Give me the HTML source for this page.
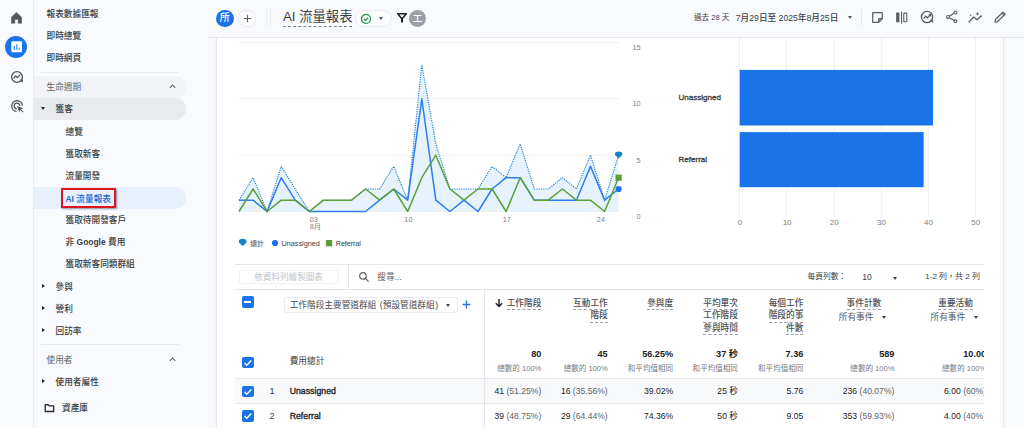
<!DOCTYPE html>
<html lang="zh-Hant">
<head>
<meta charset="utf-8">
<title>AI 流量報表</title>
<style>
*{box-sizing:border-box;margin:0;padding:0}
html,body{width:1024px;height:428px;overflow:hidden;background:#f8fafd}
body{position:relative;font-family:"Liberation Sans","Noto Sans CJK TC",sans-serif;color:#202124;font-size:8.6px;line-height:1}
.abs{position:absolute}
.t{position:absolute;white-space:nowrap;line-height:12px;height:12px}
/* left rail */
#rail{position:absolute;left:0;top:0;width:34px;height:428px;background:#f9fafd;border-right:1px solid #e9ebee}
/* sidebar */
.nav{position:absolute;left:46.5px;font-size:8.67px;color:#3a3d41;white-space:nowrap;line-height:12px;height:12px;font-weight:500}
.nav b{font-weight:700;font-size:8.45px}
.nav.sec{color:#5f6368;font-weight:400}
.nav.l2{left:55.5px}
.nav.l3{left:65.5px}
.pill{position:absolute;left:34px;width:152px;height:22px;border-radius:0 11px 11px 0}
.tri{position:absolute;width:0;height:0;border-style:solid}
.tri.down{border-width:3px 2.5px 0 2.5px;border-color:#202124 transparent transparent transparent}
.tri.right{margin-top:-0.4px;border-width:2.9px 0 2.9px 3.3px;border-color:transparent transparent transparent #202124}
.hr{position:absolute;height:1px;background:#e8eaec}
/* header */
#hdr{position:absolute;left:208px;top:0;width:816px;height:38px;background:#f9fafd;border-bottom:1px solid #e3e5e8}
/* card */
#card{position:absolute;left:216px;top:20px;width:788px;height:420px;background:#fff;border:1px solid #e6e8eb;box-shadow:0 0 3px rgba(60,64,67,.06)}
.ax{position:absolute;font-size:7.3px;line-height:9px;height:9px;color:#7b8086;white-space:nowrap}
.cj{font-family:"Liberation Sans","Noto Sans CJK TC",sans-serif}
.th{position:absolute;font-size:8.67px;font-weight:500;line-height:12.4px;color:#4b4f54;text-align:right;white-space:nowrap}
.th u{text-decoration:none;border-bottom:1px dashed #9aa0a6;padding-bottom:1.4px}
.num{position:absolute;font-size:8.6px;line-height:12px;height:12px;color:#202124;text-align:right;white-space:nowrap}
.num i{font-style:normal;color:#5f6368}
.sub{position:absolute;font-size:7.55px;line-height:10px;height:10px;color:#757a80;text-align:right;white-space:nowrap}
.med{-webkit-text-stroke:0.32px currentColor}
.cb{position:absolute;width:10.6px;height:10.6px;border-radius:2px;background:#1a73e8}
</style>
</head>
<body>

<!-- ============ main card ============ -->
<div id="card"></div>


<svg class="abs" style="left:0;top:0" width="1024" height="428" viewBox="0 0 1024 428">
  <g stroke="#f1f2f4" stroke-width="1" shape-rendering="crispEdges">
    <line x1="238" x2="620" y1="42.5" y2="42.5"/>
    <line x1="238" x2="620" y1="98.8" y2="98.8"/>
    <line x1="238" x2="620" y1="155.2" y2="155.2"/>
    <line x1="238" x2="620" y1="211.5" y2="211.5"/>
  </g>
  <polygon points="239.0,211.5 239.0,200.2 253.1,177.7 267.1,211.5 281.2,166.4 295.2,189.0 309.3,211.5 323.4,200.2 337.4,200.2 351.5,200.2 365.5,189.0 379.6,189.0 393.7,166.4 407.7,200.2 421.8,65.0 435.8,143.9 449.9,189.0 464.0,189.0 478.0,189.0 492.1,166.4 506.1,177.7 520.2,143.9 534.3,189.0 548.3,189.0 562.4,177.7 576.4,189.0 590.5,155.2 604.6,200.2 618.6,155.2 618.6,211.5" fill="#e3f1fb" opacity="0.85"/>
  <polyline points="239.0,200.2 253.1,177.7 267.1,211.5 281.2,166.4 295.2,189.0 309.3,211.5 323.4,200.2 337.4,200.2 351.5,200.2 365.5,189.0 379.6,189.0 393.7,166.4 407.7,200.2 421.8,65.0 435.8,143.9 449.9,189.0 464.0,189.0 478.0,189.0 492.1,166.4 506.1,177.7 520.2,143.9 534.3,189.0 548.3,189.0 562.4,177.7 576.4,189.0 590.5,155.2 604.6,200.2 618.6,155.2" fill="none" stroke="#1a80d0" stroke-width="1.15" stroke-dasharray="1.2 1.1"/>
  <polyline points="239.0,200.2 253.1,200.2 267.1,211.5 281.2,177.7 295.2,200.2 309.3,211.5 323.4,211.5 337.4,211.5 351.5,211.5 365.5,211.5 379.6,200.2 393.7,189.0 407.7,200.2 421.8,98.8 435.8,200.2 449.9,211.5 464.0,200.2 478.0,211.5 492.1,189.0 506.1,177.7 520.2,177.7 534.3,200.2 548.3,200.2 562.4,200.2 576.4,200.2 590.5,166.4 604.6,200.2 618.6,189.0" fill="none" stroke="#2f7df0" stroke-width="1.5" stroke-linejoin="round"/>
  <polyline points="239.0,211.5 253.1,189.0 267.1,211.5 281.2,200.2 295.2,200.2 309.3,211.5 323.4,200.2 337.4,200.2 351.5,200.2 365.5,189.0 379.6,200.2 393.7,189.0 407.7,211.5 421.8,177.7 435.8,155.2 449.9,189.0 464.0,200.2 478.0,189.0 492.1,189.0 506.1,211.5 520.2,177.7 534.3,200.2 548.3,200.2 562.4,189.0 576.4,200.2 590.5,200.2 604.6,211.5 618.6,177.7" fill="none" stroke="#5d9f37" stroke-width="1.5" stroke-linejoin="round"/>
  <!-- end markers -->
  <path d="M614.8,154.6 a3.8,3 0 0 1 7.6,0 q-0.3,1 -3.8,3.9 q-3.5,-2.9 -3.8,-3.9 z" fill="#1583c9"/>
  <rect x="615.5" y="174.6" width="6.2" height="6.2" fill="#5d9f37"/>
  <circle cx="618.6" cy="189.0" r="3.1" fill="#1a73e8"/>
  <!-- legend icons -->
  <path d="M238.8,241.9 a3.9,3.1 0 0 1 7.8,0 q-0.3,1 -3.9,4.2 q-3.6,-3.2 -3.9,-4.2 z" fill="#1583c9"/>
  <circle cx="275" cy="243" r="3.1" fill="#1a73e8"/>
  <rect x="325.9" y="240" width="6.3" height="6.3" fill="#5d9f37"/>
  <!-- bar chart -->
  <g stroke="#eff0f2" stroke-width="1" shape-rendering="crispEdges">
    <line x1="739.7" x2="739.7" y1="37" y2="216.5"/>
    <line x1="786.9" x2="786.9" y1="37" y2="216.5"/>
    <line x1="834.0" x2="834.0" y1="37" y2="216.5"/>
    <line x1="881.2" x2="881.2" y1="37" y2="216.5"/>
    <line x1="928.3" x2="928.3" y1="37" y2="216.5"/>
    <line x1="975.5" x2="975.5" y1="37" y2="216.5"/>
  </g>
  <rect x="739.7" y="69.9" width="193.3" height="55.6" fill="#1a73e8"/>
  <rect x="739.7" y="132.1" width="183.9" height="55.1" fill="#1a73e8"/>
</svg>

<div class="ax" style="left:620px;top:43.1px;width:20.5px;text-align:right">15</div><div class="ax" style="left:620px;top:99.4px;width:20.5px;text-align:right">10</div><div class="ax" style="left:620px;top:155.8px;width:20.5px;text-align:right">5</div><div class="ax" style="left:620px;top:212.1px;width:20.5px;text-align:right">0</div><div class="ax" style="left:309.7px;top:214.5px">03</div><div class="ax cj" style="left:309.7px;top:221.9px">8月</div><div class="ax" style="left:392.4px;top:214.5px;width:32px;text-align:center">10</div><div class="ax" style="left:490.8px;top:214.5px;width:32px;text-align:center">17</div><div class="ax" style="left:584.9px;top:214.5px;width:32px;text-align:center">24</div><div class="ax" style="left:724.9px;top:218.3px;width:30px;text-align:center;font-size:8px">0</div><div class="ax" style="left:772.1px;top:218.3px;width:30px;text-align:center;font-size:8px">10</div><div class="ax" style="left:819.2px;top:218.3px;width:30px;text-align:center;font-size:8px">20</div><div class="ax" style="left:866.4px;top:218.3px;width:30px;text-align:center;font-size:8px">30</div><div class="ax" style="left:913.5px;top:218.3px;width:30px;text-align:center;font-size:8px">40</div><div class="ax" style="left:960.7px;top:218.3px;width:30px;text-align:center;font-size:8px">50</div>

<!-- legend text -->
<div class="ax" style="left:250.2px;top:238.5px;color:#3c4043;font-size:6.8px">總計</div>
<div class="ax" style="left:281.4px;top:238.5px;color:#3c4043">Unassigned</div>
<div class="ax" style="left:335.8px;top:238.5px;color:#3c4043;letter-spacing:-0.14px">Referral</div>

<!-- bar labels -->
<div class="t med" style="left:678.6px;top:91.6px;font-size:8px;color:#3c4043">Unassigned</div>
<div class="t med" style="left:678.6px;top:153.9px;font-size:8px;color:#3c4043">Referral</div>

<div class="abs" id="tbl" style="left:234.7px;top:262px;width:749.5px;height:170px;overflow:hidden"><div class="abs" style="left:-234.7px;top:-262px;width:1024px;height:428px">
<div class="hr" style="left:234px;top:264px;width:760px;background:#e4e6e9"></div>
<div class="hr" style="left:234px;top:288.5px;width:760px;background:#e4e6e9"></div>
<div class="abs" style="left:234px;top:378.5px;width:760px;height:25px;background:#f8f9fa"></div>
<div class="hr" style="left:234px;top:378px;width:760px;background:#e4e6e9"></div>
<div class="hr" style="left:234px;top:403px;width:760px;background:#e4e6e9"></div>
<div class="abs" style="left:348.3px;top:264px;width:1px;height:25px;background:#e4e6e9"></div>
<div class="abs" style="left:483.6px;top:289px;width:1px;height:140px;background:#e4e6e9"></div>
<div class="abs" style="left:239.4px;top:270.3px;width:99.4px;height:14.2px;border:1px solid #eff0f2;border-radius:2px"></div>
<div class="t" style="left:254.2px;top:271.3px;font-size:8.6px;color:#c1c5ca">依資料列繪製圖表</div>
<svg class="abs" style="left:358px;top:271px" width="12" height="12" viewBox="0 0 12 12"><circle cx="4.9" cy="4.9" r="3.3" fill="none" stroke="#5f6368" stroke-width="1.2"/><path d="M7.4 7.4 L10.6 10.6" stroke="#5f6368" stroke-width="1.3"/></svg>
<div class="t" style="left:377.3px;top:271.3px;font-size:8.6px;color:#5f6368">搜尋...</div>
<div class="t" style="left:807.5px;top:271.4px;font-size:7.75px;color:#3c4043">每頁列數：</div>
<div class="t" style="left:862.2px;top:271.4px;font-size:8.6px;color:#3c4043">10</div>
<div class="tri down" style="left:892.7px;top:276.5px;border-width:3px 2.8px 0 2.8px;border-top-color:#3c4043"></div>
<div class="t" style="left:925.3px;top:271.4px;font-size:8px;color:#3c4043">1-2 列，共 2 列</div>
<div class="cb" style="left:241.9px;top:296.1px;width:11.8px;height:11.8px"></div><div class="abs" style="left:244.3px;top:301.2px;width:7px;height:1.6px;background:#fff"></div>
<div class="abs" style="left:284.1px;top:297.3px;width:174.4px;height:15.4px;border:1px solid #e9ebee;border-radius:2px"></div>
<div class="t" style="left:289.7px;top:298.6px;font-size:8.67px;word-spacing:1.2px;color:#474b50">工作階段主要管道群組 (預設管道群組<span style="margin-left:0.6px">)</span></div>
<div class="tri down" style="left:445.6px;top:304.3px;border-width:3px 2.8px 0 2.8px;border-top-color:#3c4043"></div>
<svg class="abs" style="left:462px;top:299.6px" width="9" height="9" viewBox="0 0 9 9"><path d="M4.5 0.6 V8.4 M0.6 4.5 H8.4" stroke="#1a73e8" stroke-width="1.3"/></svg>
<svg class="abs" style="left:494.4px;top:298px" width="10" height="10" viewBox="0 0 9 9"><path d="M4.5 1 V7.6 M1.6 4.8 L4.5 7.7 L7.4 4.8" fill="none" stroke="#202124" stroke-width="1.3"/></svg>
<div class="th" style="right:482.7px;top:296.8px"><u>工作階段</u></div>
<div class="th" style="right:416.3px;top:296.8px"><u>互動工作</u><br><u>階段</u></div>
<div class="th" style="right:350.9px;top:296.8px"><u>參與度</u></div>
<div class="th" style="right:286.1px;top:296.8px"><u>平均單次</u><br><u>工作階段</u><br><u>參與時間</u></div>
<div class="th" style="right:220.7px;top:296.8px"><u>每個工作</u><br><u>階段的事</u><br><u>件數</u></div>
<div class="th" style="right:142.8px;top:296.8px"><u>事件計數</u></div>
<div class="th" style="right:51.1px;top:296.8px"><u>重要活動</u></div>
<div class="t" style="right:150.6px;top:310.6px;font-size:8.67px;color:#55595e">所有事件</div>
<div class="tri down" style="left:882.4px;top:315.6px;border-width:3px 2.8px 0 2.8px;border-top-color:#3c4043"></div>
<div class="t" style="right:58.9px;top:310.6px;font-size:8.67px;color:#55595e">所有事件</div>
<div class="tri down" style="left:974.1px;top:315.6px;border-width:3px 2.8px 0 2.8px;border-top-color:#3c4043"></div>
<div class="cb" style="left:241.9px;top:356.7px;width:11.8px;height:11.8px"></div><svg class="abs" style="left:241.9px;top:356.7px" width="11.8" height="11.8" viewBox="0 0 11.8 11.8"><path d="M2.5 6 L4.8 8.3 L9.3 3.6" fill="none" stroke="#fff" stroke-width="1.4"/></svg>
<div class="t" style="left:289.7px;top:354.6px;font-size:8.67px;color:#3c4043">費用總計</div>
<div class="num" style="right:482.7px;top:347.9px;font-weight:700;font-size:9.15px">80</div>
<div class="sub" style="right:482.7px;top:363.7px">總數的 100%</div>
<div class="num" style="right:416.3px;top:347.9px;font-weight:700;font-size:9.15px">45</div>
<div class="sub" style="right:416.3px;top:363.7px">總數的 100%</div>
<div class="num" style="right:350.9px;top:347.9px;font-weight:700;font-size:9.15px">56.25%</div>
<div class="sub" style="right:350.9px;top:363.7px">和平均值相同</div>
<div class="num" style="right:286.1px;top:347.9px;font-weight:700;font-size:9.15px">37 秒</div>
<div class="sub" style="right:286.1px;top:363.7px">和平均值相同</div>
<div class="num" style="right:220.7px;top:347.9px;font-weight:700;font-size:9.15px">7.36</div>
<div class="sub" style="right:220.7px;top:363.7px">和平均值相同</div>
<div class="num" style="right:129.6px;top:347.9px;font-weight:700;font-size:9.15px">589</div>
<div class="sub" style="right:129.6px;top:363.7px">總數的 100%</div>
<div class="num" style="right:37.9px;top:347.9px;font-weight:700;font-size:9.15px">10.00</div>
<div class="sub" style="right:37.9px;top:363.7px">總數的 100%</div>
<div class="cb" style="left:241.9px;top:385.6px;width:11.8px;height:11.8px"></div><svg class="abs" style="left:241.9px;top:385.6px" width="11.8" height="11.8" viewBox="0 0 11.8 11.8"><path d="M2.5 6 L4.8 8.3 L9.3 3.6" fill="none" stroke="#fff" stroke-width="1.4"/></svg>
<div class="t" style="left:267px;width:10px;text-align:center;top:384.7px;font-size:9.2px;color:#3c4043">1</div>
<div class="t med" style="left:289.7px;top:384.7px;font-size:8.75px;color:#202124">Unassigned</div>
<div class="num" style="right:482.7px;top:384.7px">41 <i>(51.25%)</i></div>
<div class="num" style="right:416.3px;top:384.7px">16 <i>(35.56%)</i></div>
<div class="num" style="right:350.9px;top:384.7px">39.02%</div>
<div class="num" style="right:286.1px;top:384.7px">25 秒</div>
<div class="num" style="right:220.7px;top:384.7px">5.76</div>
<div class="num" style="right:129.6px;top:384.7px">236 <i>(40.07%)</i></div>
<div class="num" style="right:37.9px;top:384.7px">6.00 <i>(60%)</i></div>
<div class="cb" style="left:241.9px;top:410.4px;width:11.8px;height:11.8px"></div><svg class="abs" style="left:241.9px;top:410.4px" width="11.8" height="11.8" viewBox="0 0 11.8 11.8"><path d="M2.5 6 L4.8 8.3 L9.3 3.6" fill="none" stroke="#fff" stroke-width="1.4"/></svg>
<div class="t" style="left:267px;width:10px;text-align:center;top:409.6px;font-size:9.2px;color:#3c4043">2</div>
<div class="t med" style="left:289.7px;top:409.6px;font-size:8.75px;color:#202124">Referral</div>
<div class="num" style="right:482.7px;top:409.6px">39 <i>(48.75%)</i></div>
<div class="num" style="right:416.3px;top:409.6px">29 <i>(64.44%)</i></div>
<div class="num" style="right:350.9px;top:409.6px">74.36%</div>
<div class="num" style="right:286.1px;top:409.6px">50 秒</div>
<div class="num" style="right:220.7px;top:409.6px">9.05</div>
<div class="num" style="right:129.6px;top:409.6px">353 <i>(59.93%)</i></div>
<div class="num" style="right:37.9px;top:409.6px">4.00 <i>(40%)</i></div>
</div></div>


<!-- ============ header ============ -->
<div id="hdr"></div>

<div class="abs" style="left:216px;top:9.9px;width:17.5px;height:17.5px;border-radius:50%;background:#1a73e8"></div>
<div class="t" style="left:219.7px;top:12.1px;font-size:10px;color:#fff;font-weight:500">所</div>
<div class="abs" style="left:238.2px;top:9.5px;width:17.6px;height:17.6px;border-radius:50%;border:1px dotted #cfd2d6;background:#fdfdfe"></div>
<svg class="abs" style="left:242.5px;top:13.5px" width="9" height="9" viewBox="0 0 9 9"><path d="M4.5 0.8 V8.2 M0.8 4.5 H8.2" stroke="#5f6368" stroke-width="1.1"/></svg>
<div class="abs" style="left:269.6px;top:9px;width:1px;height:17px;background:#e9ebee"></div>
<div class="abs" style="left:265.6px;top:9px;width:1px;height:17px;background:#f0f1f3"></div>
<div class="t" style="left:283px;top:9.4px;font-size:13.3px;line-height:16px;height:16px;color:#3c4043">AI 流量報表</div>
<div class="abs" style="left:283px;top:25.8px;width:69px;height:0;border-top:1px dashed #80868b"></div>
<div class="abs" style="left:355.4px;top:9.7px;width:36.4px;height:17.4px;border-radius:9px;border:1px solid #eaecef;background:#fbfcfd"></div>
<svg class="abs" style="left:359.7px;top:12.6px" width="12" height="12" viewBox="0 0 12 12"><circle cx="6" cy="5.9" r="4.5" fill="none" stroke="#1e8e3e" stroke-width="1.2"/><path d="M3.9 6 L5.4 7.5 L8.2 4.6" fill="none" stroke="#1e8e3e" stroke-width="1.2"/></svg>
<div class="tri down" style="left:379.2px;top:17.4px;border-width:3px 2.8px 0 2.8px;border-top-color:#50545a"></div>
<svg class="abs" style="left:396px;top:12.2px" width="12" height="12" viewBox="0 0 12 12"><path d="M1.7 1.7 H10.3 L6 7 Z" fill="none" stroke="#202124" stroke-width="1.5" stroke-linejoin="round"/><rect x="5" y="5.6" width="2" height="4.9" fill="#202124"/></svg>
<div class="abs" style="left:408.8px;top:10.1px;width:17.3px;height:17.3px;border-radius:50%;background:#9aa0a6"></div>
<div class="t" style="left:412.7px;top:12.8px;font-size:9.6px;color:#fff;font-weight:500">工</div>

<div class="t" style="left:694px;top:12px;font-size:7.6px;color:#3c4043">過去 28 天</div>
<div class="t" style="left:735.8px;top:11.6px;font-size:8.67px;font-weight:500;color:#3c4043">7月29日至 2025年8月25日</div>
<div class="tri down" style="left:848px;top:16.3px;border-width:3px 2.8px 0 2.8px;border-top-color:#50545a"></div>
<div class="abs" style="left:861px;top:9px;width:1px;height:17px;background:#e6e8eb"></div>
<!-- note -->
<svg class="abs" style="left:870.5px;top:10.8px" width="13" height="13" viewBox="0 0 13 13"><path d="M1.9 1.5 H10.8 Q11.3 1.5 11.3 2 V7.7 L7.7 11.3 H2.1 Q1.7 11.3 1.7 10.9 V1.9 Q1.7 1.5 2.1 1.5 M7.7 11.3 V7.7 H11.3" fill="none" stroke="#5a5e63" stroke-width="1.25" stroke-linejoin="round"/></svg>
<!-- compare columns -->
<svg class="abs" style="left:895px;top:10.8px" width="13" height="13" viewBox="0 0 13 13"><rect x="1.1" y="1.5" width="3.3" height="9.8" rx="0.6" fill="#5a5e63"/><rect x="6" y="0.5" width="1.1" height="12" fill="#5a5e63"/><rect x="8.8" y="2.1" width="3" height="8.6" rx="0.4" fill="none" stroke="#5a5e63" stroke-width="1.1"/></svg>
<!-- insights -->
<svg class="abs" style="left:919.7px;top:10.2px" width="14" height="14" viewBox="0 0 14 14"><circle cx="7" cy="7" r="5.6" fill="none" stroke="#5a5e63" stroke-width="1.35"/><path d="M3.6 8.6 L5.7 6.2 L7.5 7.8 L10.2 4.9" fill="none" stroke="#5a5e63" stroke-width="1.25"/><path d="M8.7 4.5 H10.6 V6.4" fill="none" stroke="#5a5e63" stroke-width="1.1"/><path d="M10.6 10.2 L12.7 12.3 L12.7 9.8 Z" fill="#5a5e63" stroke="#5a5e63" stroke-width="0.8"/></svg>
<!-- share -->
<svg class="abs" style="left:944.5px;top:10.4px" width="14" height="14" viewBox="0 0 14 14"><path d="M10.3 2.6 L3.1 6.9 L10.3 11.2" fill="none" stroke="#5a5e63" stroke-width="1.2"/><circle cx="10.4" cy="2.5" r="1.45" fill="#f9fafd" stroke="#5a5e63" stroke-width="1.1"/><circle cx="3" cy="6.9" r="1.45" fill="#f9fafd" stroke="#5a5e63" stroke-width="1.1"/><circle cx="10.4" cy="11.3" r="1.45" fill="#f9fafd" stroke="#5a5e63" stroke-width="1.1"/></svg>
<!-- sparkle trend -->
<svg class="abs" style="left:968px;top:10.5px" width="15" height="14" viewBox="0 0 15 14"><path d="M1.3 10.6 L5.7 6 L9 8.7 L13 5.2" fill="none" stroke="#5a5e63" stroke-width="1.3" stroke-linejoin="round"/><circle cx="1.3" cy="10.6" r="0.9" fill="#5a5e63"/><circle cx="13" cy="5.2" r="0.9" fill="#5a5e63"/><path d="M9.4 0.9 L9.95 2.35 L11.4 2.9 L9.95 3.45 L9.4 4.9 L8.85 3.45 L7.4 2.9 L8.85 2.35 Z" fill="#5a5e63"/><path d="M2.6 3.1 L2.95 3.95 L3.8 4.3 L2.95 4.65 L2.6 5.5 L2.25 4.65 L1.4 4.3 L2.25 3.95 Z" fill="#5a5e63"/></svg>
<!-- pencil -->
<svg class="abs" style="left:993px;top:10.2px" width="14" height="14" viewBox="0 0 14 14"><path d="M2.1 12 L2.5 9.5 L9.9 2.1 L12 4.2 L4.6 11.6 Z" fill="none" stroke="#5a5e63" stroke-width="1.3" stroke-linejoin="round"/><path d="M9 3 L11.1 5.1" stroke="#5a5e63" stroke-width="1.1"/></svg>

<!-- ============ sidebar ============ -->

<div class="nav" style="top:7.8px">報表數據匯報</div>
<div class="nav" style="top:29.9px">即時總覽</div>
<div class="nav" style="top:51.9px">即時網頁</div>
<div class="hr" style="left:41px;top:72px;width:138px"></div>

<div class="pill" style="top:75.5px;background:#f1f3f6"></div>
<div class="nav sec" style="top:80.5px">生命週期</div>
<svg class="abs" style="left:168px;top:82px" width="9" height="9" viewBox="0 0 9 9"><path d="M1.8 5.8 L4.5 3.1 L7.2 5.8" fill="none" stroke="#5f6368" stroke-width="1.1"/></svg>

<div class="pill" style="top:98px;background:#e8eaee"></div>
<div class="tri down" style="left:40.9px;top:107.3px;border-width:3px 2.8px 0 2.8px"></div>
<div class="nav l2" style="top:102.5px">獲客</div>

<div class="nav l3" style="top:125.7px">總覽</div>
<div class="nav l3" style="top:147.7px">獲取新客</div>
<div class="nav l3" style="top:169.6px">流量開發</div>

<div class="pill" style="top:187px;background:#e8f0fe"></div>
<div class="nav l3" style="top:192.5px;color:#1967d2"><b>AI</b> 流量報表</div>
<div class="abs" style="left:60.9px;top:187.7px;width:54.8px;height:20.1px;border:2px solid #de1620;box-shadow:0.6px 0.8px 1.8px rgba(0,0,0,.4)"></div>

<div class="nav l3" style="top:213.5px">獲取待開發客戶</div>
<div class="nav l3" style="top:236px">非 <b>Google</b> 費用</div>
<div class="nav l3" style="top:258px">獲取新客同類群組</div>

<div class="tri right" style="left:42px;top:284.5px"></div>
<div class="nav l2" style="top:281px">參與</div>
<div class="tri right" style="left:42px;top:306.2px"></div>
<div class="nav l2" style="top:302.7px">營利</div>
<div class="tri right" style="left:42px;top:328.4px"></div>
<div class="nav l2" style="top:324.9px">回訪率</div>

<div class="hr" style="left:41px;top:344.4px;width:138px"></div>
<div class="nav sec" style="top:353.5px">使用者</div>
<svg class="abs" style="left:168px;top:354.6px" width="9" height="9" viewBox="0 0 9 9"><path d="M1.8 5.8 L4.5 3.1 L7.2 5.8" fill="none" stroke="#5f6368" stroke-width="1.1"/></svg>
<div class="tri right" style="left:42px;top:379.6px"></div>
<div class="nav l2" style="top:376.1px">使用者屬性</div>

<svg class="abs" style="left:44px;top:402.7px" width="11" height="10" viewBox="0 0 11 10"><path d="M1.2 1.7 H4.2 L5.2 2.9 H9.7 V8.5 H1.2 Z" fill="none" stroke="#2a2d31" stroke-width="1.35" stroke-linejoin="round"/></svg>
<div class="nav" style="left:62px;top:401.7px">資產庫</div>


<!-- ============ left rail ============ -->
<div id="rail"></div>

<!-- home -->
<svg class="abs" style="left:11.3px;top:12px" width="11" height="11.6" viewBox="0 0 11 11.6"><path d="M0.4 5.2 L5.5 0.5 L10.6 5.2 V11.2 H7.2 V7.3 H3.8 V11.2 H0.4 Z" fill="#54585d" stroke="#54585d" stroke-width="0.6" stroke-linejoin="round"/></svg>
<!-- reports (active) -->
<div class="abs" style="left:5.4px;top:36.1px;width:21.8px;height:21.8px;border-radius:50%;background:#1a73e8"></div>
<svg class="abs" style="left:10.6px;top:41.2px" width="11.6" height="11.6" viewBox="0 0 11.6 11.6"><rect x="0.3" y="0.3" width="11" height="11" rx="1.4" fill="#fff"/><rect x="2.7" y="4.9" width="1.25" height="4" fill="#4a90ee"/><rect x="5.15" y="3.2" width="1.25" height="5.7" fill="#4a90ee"/><rect x="7.6" y="6.7" width="1.25" height="2.2" fill="#4a90ee"/></svg>
<!-- explore -->
<svg class="abs" style="left:10px;top:69.9px" width="14" height="14" viewBox="0 0 14 14"><circle cx="7" cy="7" r="5.4" fill="none" stroke="#54585d" stroke-width="1.35"/><path d="M3.6 8.6 L5.7 6 L7.5 7.7 L10.3 4.6" fill="none" stroke="#54585d" stroke-width="1.25"/><path d="M10.4 10 L12.5 12.1 L12.5 9.8 Z" fill="#54585d" stroke="#54585d" stroke-width="0.8"/></svg>
<!-- advertising -->
<svg class="abs" style="left:9.6px;top:99.2px" width="15" height="15" viewBox="0 0 14 14"><path d="M6.2 11.6 A5 5 0 1 1 11.6 6.2" fill="none" stroke="#54585d" stroke-width="1.25"/><path d="M6.4 9.1 A2.6 2.6 0 1 1 9.1 6.4" fill="none" stroke="#54585d" stroke-width="1.15"/><path d="M6.6 6.6 L12.4 8.6 L10.2 9.6 L12.6 12 L12 12.6 L9.6 10.2 L8.6 12.4 Z" fill="#54585d"/></svg>

</body>
</html>
